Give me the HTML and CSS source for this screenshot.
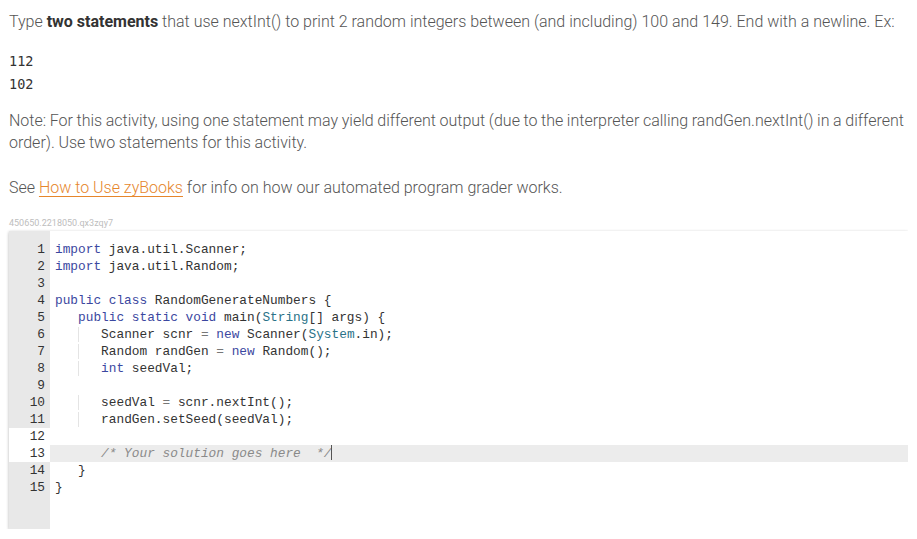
FILE: index.html
```html
<!DOCTYPE html>
<html>
<head>
<meta charset="utf-8">
<link rel="stylesheet" href="styles.css">
</head>
<body>
<p class="prompt">Type <b>two statements</b> that use nextInt() to print 2 random integers between (and including) 100 and 149. End with a newline. Ex:</p>
<pre class="example">112
102</pre>
<p class="note">Note: For this activity, using one statement may yield different output (due to the interpreter calling randGen.nextInt() in a different order). Use two statements for this activity.</p>
<p class="see">See <a href="#">How to Use zyBooks</a> for info on how our automated program grader works.</p>
<div class="ident">450650.2218050.qx3zqy7</div>
<div class="editor">
  <div class="gutter">
    <div class="num">1</div><div class="num">2</div><div class="num">3</div><div class="num">4</div><div class="num">5</div><div class="num">6</div><div class="num">7</div><div class="num">8</div><div class="num">9</div><div class="num">10</div><div class="num">11</div><div class="num active">12</div><div class="num active">13</div><div class="num">14</div><div class="num">15</div>
  </div>
  <div class="code">
    <div class="ln"><span class="kw">import</span> java.util.Scanner;</div>
    <div class="ln"><span class="kw">import</span> java.util.Random;</div>
    <div class="ln"></div>
    <div class="ln"><span class="kw">public</span> <span class="kw">class</span> RandomGenerateNumbers {</div>
    <div class="ln">   <span class="kw">public</span> <span class="kw">static</span> <span class="kw">void</span> main(<span class="ty">String</span>[] args) {</div>
    <div class="ln">   <span class="guide">   </span>Scanner scnr <span class="op">=</span> <span class="kw">new</span> Scanner(<span class="ty">System</span>.in);</div>
    <div class="ln">   <span class="guide">   </span>Random randGen <span class="op">=</span> <span class="kw">new</span> Random();</div>
    <div class="ln">   <span class="guide">   </span><span class="kw">int</span> seedVal;</div>
    <div class="ln"></div>
    <div class="ln">   <span class="guide">   </span>seedVal <span class="op">=</span> scnr.nextInt();</div>
    <div class="ln">   <span class="guide">   </span>randGen.setSeed(seedVal);</div>
    <div class="ln"></div>
    <div class="ln current">      <span class="cm">/* Your solution goes here  */</span><span class="cursor"></span></div>
    <div class="ln">   }</div>
    <div class="ln">}</div>
  </div>
</div>
</body>
</html>
```
FILE: styles.css
```css
html, body {
  margin: 0;
  padding: 0;
  background: #fff;
}
body {
  padding: 0 0 0 9px;
  width: 899px;
  font-family: Roboto, "Liberation Sans", sans-serif;
  font-weight: 300;
  font-size: 16px;
  color: #555;
}
p {
  margin: 0;
  line-height: 22px;
}
b {
  font-weight: 700;
  color: #333;
}
.prompt {
  margin-top: 11px;
  width: 905px;
}
.example {
  margin: 17px 0 0;
  font-family: "DejaVu Sans Mono", "Liberation Mono", monospace;
  font-size: 13.5px;
  line-height: 23px;
  color: #333;
}
.note {
  margin-top: 14px;
  width: 905px;
  word-spacing: -0.3px;
}
.see {
  margin-top: 23px;
}
.see a {
  color: #e6862c;
  text-decoration: underline;
  text-decoration-thickness: 1px;
  text-underline-offset: 3px;
}
.ident {
  margin-top: 18px;
  font-size: 9px;
  line-height: 12px;
  color: #bdbdbd;
  font-weight: 400;
}
.editor {
  margin-top: 2px;
  width: 899px;
  height: 298px;
  display: flex;
  background: #fff;
  box-shadow: 0 1px 3px rgba(0, 0, 0, 0.3);
  font-family: "Liberation Mono", "DejaVu Sans Mono", monospace;
  font-size: 12.8px;
  font-weight: 400;
  color: #333;
}
.gutter {
  width: 41px;
  flex: none;
  background: #e8e8e8;
  padding-top: 10px;
}
.num {
  height: 17px;
  line-height: 17px;
  text-align: right;
  padding-right: 5px;
  color: #333;
}
.num.active {
  background: #fff;
}
.code {
  flex: 1;
  padding-top: 10px;
}
.ln {
  height: 17px;
  line-height: 17px;
  white-space: pre;
  padding-left: 5px;
}
.ln.current {
  background: #ececec;
}
.kw {
  color: #3b47a0;
}
.ty {
  color: #2a7288;
}
.op {
  color: #777;
}
.cm {
  color: #8a8a8a;
  font-style: italic;
}
.guide {
  box-shadow: inset 1px 0 0 #e4e4e4;
}
.cursor {
  display: inline-block;
  width: 1px;
  height: 15px;
  vertical-align: -3px;
  background: #555;
}
```
